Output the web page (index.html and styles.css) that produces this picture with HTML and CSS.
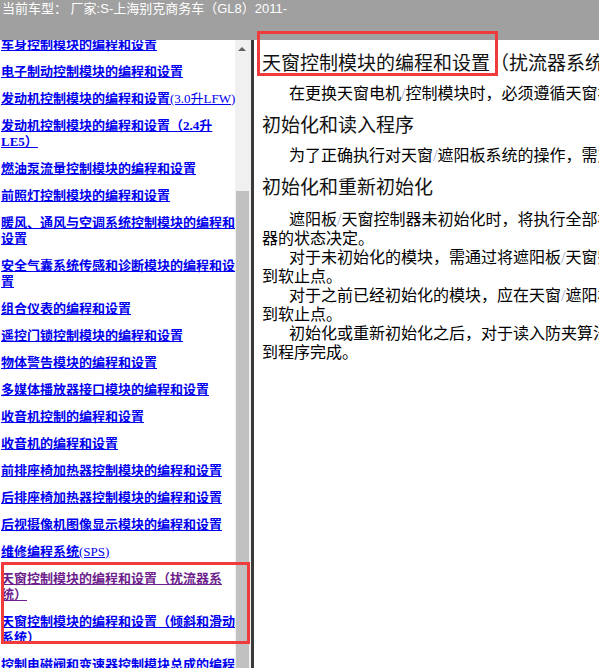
FILE: index.html
```html
<!DOCTYPE html>
<html lang="zh-CN">
<head>
  <meta charset="UTF-8" />
  <meta name="viewport" content="width=device-width, initial-scale=1.0"/>
  <title>编程和设置</title>
  <link rel="stylesheet" href="styles.css">
</head>
<body>

  <div class="topbar">当前车型： 厂家:S-上海别克商务车（GL8）2011-</div>

  <div class="main">
    <div class="nav">
      <div class="nav-list">
        <ul class="links">
          <li><a href="#">车身控制模块的编程和设置</a></li>
          <li><a href="#">电子制动控制模块的编程和设置</a></li>
          <li><a href="#">发动机控制模块的编程和设置<span class="plain">(3.0升LFW)</span></a></li>
          <li><a href="#">发动机控制模块的编程和设置（2.4升LE5）</a></li>
          <li><a href="#">燃油泵流量控制模块的编程和设置</a></li>
          <li><a href="#">前照灯控制模块的编程和设置</a></li>
          <li><a href="#">暖风、通风与空调系统控制模块的编程和设置</a></li>
          <li><a href="#">安全气囊系统传感和诊断模块的编程和设置</a></li>
          <li><a href="#">组合仪表的编程和设置</a></li>
          <li><a href="#">遥控门锁控制模块的编程和设置</a></li>
          <li><a href="#">物体警告模块的编程和设置</a></li>
          <li><a href="#">多媒体播放器接口模块的编程和设置</a></li>
          <li><a href="#">收音机控制的编程和设置</a></li>
          <li><a href="#">收音机的编程和设置</a></li>
          <li><a href="#">前排座椅加热器控制模块的编程和设置</a></li>
          <li><a href="#">后排座椅加热器控制模块的编程和设置</a></li>
          <li><a href="#">后视摄像机图像显示模块的编程和设置</a></li>
          <li><a href="#">维修编程系统<span class="plain">(SPS)</span></a></li>
          <li><a href="#" class="visited">天窗控制模块的编程和设置（扰流器系统）</a></li>
          <li><a href="#">天窗控制模块的编程和设置（倾斜和滑动系统）</a></li>
          <li><a href="#">控制电磁阀和变速器控制模块总成的编程和设置</a></li>
        </ul>
      </div>
      <div class="scrollbar">
        <div class="arrow-up"></div>
        <div class="thumb"></div>
      </div>
    </div>

    <div class="splitter"></div>

    <div class="content">
      <div class="doc">
        <h1>天窗控制模块的编程和设置（扰流器系统）</h1>
        <p>在更换天窗电机<span class="sep">/</span>控制模块时，必须遵循天窗初始化程序。</p>

        <h2>初始化和读入程序</h2>
        <p>为了正确执行对天窗<span class="sep">/</span>遮阳板系统的操作，需对控制模块进行初始化。</p>

        <h2 class="last">初始化和重新初始化</h2>
        <p class="tight">遮阳板<span class="sep">/</span>天窗控制器未初始化时，将执行全部初始化程序，由控制<br>器的状态决定。</p>
        <p class="tight">对于未初始化的模块，需通过将遮阳板<span class="sep">/</span>天窗完全关闭并保持<br>到软止点。</p>
        <p class="tight">对于之前已经初始化的模块，应在天窗<span class="sep">/</span>遮阳板关闭后保持<br>到软止点。</p>
        <p class="tight">初始化或重新初始化之后，对于读入防夹算法，应保持开关直<br>到程序完成。</p>
      </div>
    </div>
  </div>

  <!-- annotation boxes drawn over the screenshot -->
  <div class="mark mark-nav"></div>
  <div class="mark mark-title"></div>

</body>
</html>
```

FILE: styles.css
```css
body {
  margin: 0;
  font-family: "Liberation Sans", "Noto Sans CJK SC", sans-serif;
  background: #fff;
  color: #000;
  overflow: hidden;
}

.topbar {
  height: 40px;
  background-color: #a0a0a0;
  color: #fff;
  font-size: 13px;
  line-height: 18px;
  padding-left: 2px;
  white-space: nowrap;
}

.main {
  display: flex;
  height: 628px;
  overflow: hidden;
}

/* left navigation pane */
.nav {
  display: flex;
  width: 251px;
  flex-shrink: 0;
}

.nav-list {
  width: 235px;
  overflow: hidden;
}

.links {
  list-style: none;
  margin: -3px 0 0 0;
  padding: 0 0 0 1px;
  width: 240px;
  font-family: "Liberation Serif", "Noto Sans CJK SC", serif;
  font-size: 13px;
  font-weight: bold;
  line-height: 16px;
}

.links li {
  margin-bottom: 11px;
}

.links a {
  color: #0000ee;
  text-decoration: underline;
}

.links a.visited {
  color: #6e1f8c;
}

.links .plain {
  font-weight: normal;
}

.scrollbar {
  width: 16px;
  background: #f0f0f0;
  display: flex;
  flex-direction: column;
}

.arrow-up {
  height: 17px;
  display: flex;
  justify-content: center;
  align-items: center;
}

.arrow-up::before {
  content: "";
  border-left: 4px solid transparent;
  border-right: 4px solid transparent;
  border-bottom: 4px solid #606060;
  margin-right: 2px;
}

.thumb {
  margin: 134px 2px 0 1px;
  flex: 1;
  background: #c1c1c1;
}

.splitter {
  width: 3px;
  flex-shrink: 0;
  background: #3a3a3a;
}

/* right document pane */
.content {
  flex: 1;
  overflow: hidden;
  padding: 10px 0 0 8px;
}

.doc {
  width: 720px;
  font-family: "Liberation Serif", "Noto Sans CJK SC", serif;
}

h1, h2 {
  font-family: "Noto Sans CJK SC", sans-serif;
  font-size: 19px;
  font-weight: normal;
  line-height: 24px;
  margin: 0 0 10px 0;
  color: #111;
}

h2.last {
  margin-bottom: 12px;
}

p {
  font-size: 16px;
  line-height: 19px;
  margin: 0 0 9px 0;
  text-indent: 27px;
  white-space: nowrap;
}

p.tight {
  margin: 0;
}

.sep {
  color: #9aa7c7;
}

.mark {
  position: absolute;
  box-sizing: border-box;
  border: 3px solid #ef3b3b;
}

.mark-nav {
  left: 1px;
  top: 562px;
  width: 249px;
  height: 82px;
}

.mark-title {
  left: 257px;
  top: 31px;
  width: 241px;
  height: 45px;
}
```
